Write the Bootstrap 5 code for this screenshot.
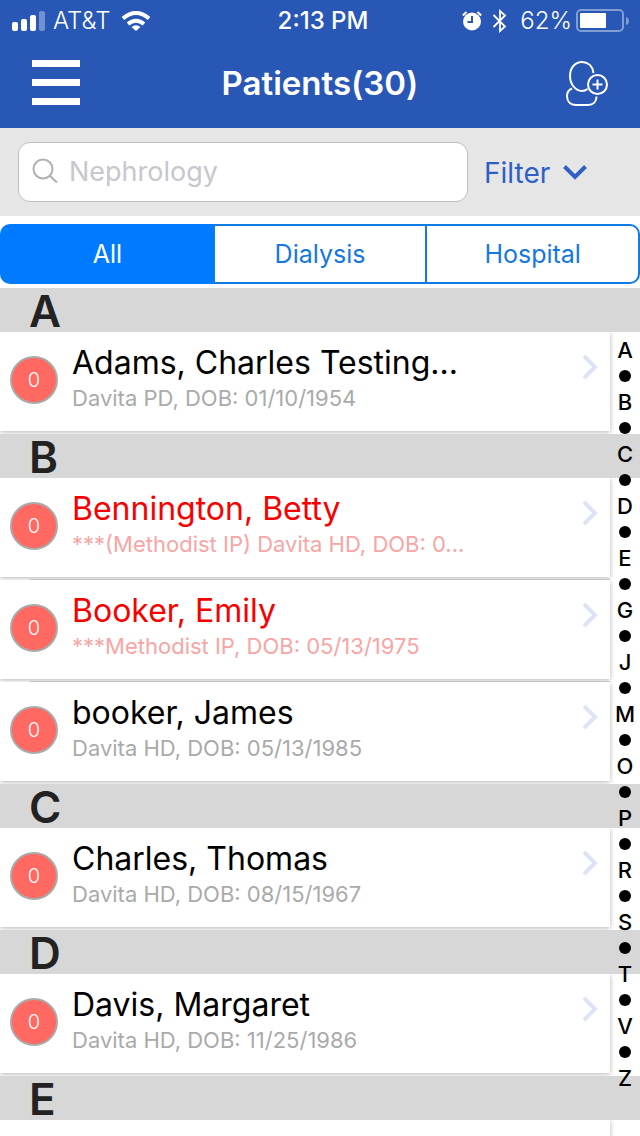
<!DOCTYPE html>
<html lang="en">
<head>
<meta charset="utf-8">
<meta name="viewport" content="width=device-width, initial-scale=1">
<title>Patients</title>
<link href="https://cdn.jsdelivr.net/npm/bootstrap@5.3.0/dist/css/bootstrap.min.css" rel="stylesheet">
<style>
  body { font-family: Inter, "Liberation Sans", sans-serif; color: #000; background: #fff; }
  svg { display: block; flex: none; }
  .app-top { background: #2957b5; color: #fff; }
  .app-top, .search-row, .segments { flex-shrink: 0; }
  .status-row { height: 40px; font-size: 24px; line-height: 32px; padding: 2px 10px 0 12px; }
  .side { flex: 1 1 0; }
  .clock { font-weight: 500; padding-left: 4px; }
  .thin { font-weight: 300; }
  .alarm { margin-right: 10px; }
  .bluetooth { margin-right: 12px; }
  .title-row { height: 88px; padding: 0 32px 2px; }
  .title-text { font-size: 33px; line-height: 40px; font-weight: 600; }
  .icon-btn { background: none; border: 0; padding: 0; color: inherit; }
  .search-row { height: 88px; background: #e6e6e6; padding: 0 18px; }
  .search-box { position: relative; width: 450px; max-width: 75%; }
  .search-box svg { position: absolute; left: 14px; top: 16px; }
  .search-box input { height: 60px; border: 1px solid #bcbec0; border-radius: 12px; font-size: 27px; padding: 0 16px 2px 50px; background: #fff; }
  .search-box input::placeholder { color: #c7c7cd; opacity: 1; }
  .filter-btn { color: #2e5fc4; font-size: 28px; line-height: 36px; gap: 13px; padding-top: 2px; }
  .segments { padding: 8px 0 4px; }
  .segments .btn { height: 60px; flex: 1 1 0; font-size: 25px; line-height: 32px; padding: 0; display: flex; align-items: center; justify-content: center;
    border: 2px solid #0f7be6; border-radius: 10px; --bs-btn-color: #1478e0; --bs-btn-hover-color: #1478e0; }
  .segments .btn-group > .btn:not(:first-of-type) { margin-left: -2px; }
  .segments .btn-check:checked + .btn { background: #007aff; border-color: #007aff; color: #fff; z-index: 0; }
  .list-area { min-height: 0; }
  .scroller { overflow-y: auto; scrollbar-width: none; }
  .scroller::-webkit-scrollbar { display: none; }
  .letter-head { height: 44px; background: #d7d7d7; color: #222; font-size: 44px; line-height: 44px; font-weight: 600; padding: 1px 0 0 29px; margin: 0; }
  .patients { padding-right: 30px; }
  .patients li { overflow: hidden; padding-right: 6px; margin-right: -6px; }
  .patients li:not(:last-child)::after { content: ""; display: block; height: 1px; margin: -1px 0 0 30px; background: #c3c3c3; position: relative; }
  .patient { background: #fff; height: 99px; margin-bottom: 3px; padding: 0 12px 3px 10px; color: #000; text-decoration: none; box-shadow: 0 1px 5px rgba(0,0,0,.3); position: relative; }
  .count { width: 48px; height: 48px; border: 2px solid #aaa; background: #ff6961; color: #fff; font-size: 20px; line-height: 24px; font-weight: 300; }
  .who { font-size: 32px; line-height: 38px; }
  .info { font-size: 22px; line-height: 28px; color: #aaa; margin-top: 2px; }
  .words { padding: 12px 0 0 14px; width: 412px; }
  .alerting .who { color: #f90000; }
  .alerting .info { color: #f8a5a5; }
  .chev { margin-top: 22px; }
  .jump { position: absolute; top: 49px; right: 0; width: 30px; }
  .jump a { color: #000; text-decoration: none; font-size: 22px; line-height: 26px; font-weight: 500; }
  .jump i { height: 26px; }
  .jump i::before { content: ""; width: 12px; height: 12px; border-radius: 50%; background: #000; }
</style>
</head>
<body>
<svg width="0" height="0" class="position-absolute" aria-hidden="true">
  <symbol id="next" viewBox="0 0 16 26"><path d="M2 2l11 11L2 24" fill="none" stroke="#dde4f6" stroke-width="4"/></symbol>
</svg>
<div class="d-flex flex-column vh-100 overflow-hidden">
  <header class="app-top">
    <div class="status-row d-flex align-items-center">
      <div class="side d-flex align-items-center">
        <svg width="33" height="20" viewBox="0 0 33 20" fill="#fff"><rect y="11" width="6" height="9" rx="2"/><rect x="9" y="8" width="6" height="12" rx="2"/><rect x="18" y="4" width="6" height="16" rx="2"/><rect x="27" width="6" height="20" rx="2" opacity=".35"/></svg>
        <span class="ms-2 thin">AT&amp;T</span>
        <svg class="ms-2" width="36" height="20" viewBox="-4 0 36 20"><g fill="none" stroke="#fff" stroke-width="4"><path d="M1 7.500Q14-3.500 27 7.500"/><path d="M6 13Q14 6.500 22 13"/></g><path d="M9.500 16Q14 12.500 18.500 16L14 20z" fill="#fff"/></svg>
      </div>
      <div class="clock">2:13 PM</div>
      <div class="side d-flex align-items-center justify-content-end">
        <svg class="alarm" width="20" height="20" viewBox="0 0 20 20"><circle cx="10" cy="10.500" r="9" fill="#fff"/><path d="M10 5v6H5.500" fill="none" stroke="#2957b5" stroke-width="2"/><path d="M.8 4.500L4.500 1M15.500 1l3.700 3.500" fill="none" stroke="#fff" stroke-width="2"/></svg>
        <svg class="bluetooth" width="16" height="24" viewBox="0 0 16 24"><path d="M1.500 6l11.500 11.500L8 22V2l5 4.500L1.500 18" fill="none" stroke="#fff" stroke-width="1.800"/></svg>
        <span class="thin">62%</span>
        <svg class="ms-1" width="54" height="24" viewBox="0 0 54 24"><rect x="1" y="1" width="46" height="21" rx="4" fill="none" stroke="#819dd4" stroke-width="2"/><rect x="4" y="4" width="26" height="15" rx="1" fill="#fff"/><path d="M50 8q3 1 3 4t-3 4z" fill="#819dd4"/></svg>
      </div>
    </div>
    <nav class="title-row d-flex align-items-center" aria-label="Main">
      <div class="side"><button class="icon-btn d-block" type="button" aria-label="Menu"><svg width="48" height="46" viewBox="0 0 48 46" fill="#fff"><path d="M0 0h48v7H0zM0 19h48v7H0zM0 38h48v7H0z"/></svg></button></div>
      <h1 class="title-text m-0">Patients(30)</h1>
      <div class="side d-flex justify-content-end"><button class="icon-btn d-block" type="button" aria-label="Add patient"><svg width="42" height="46" viewBox="0 0 42 46" fill="none" stroke="#fff" stroke-width="2"><path d="M27.500 13C26.500 5.500 21.500 2 16 2 8.500 2 4 8.500 4 16c0 8 5.500 15 12 15 2 0 4-.8 5.500-2"/><path d="M6 28.500C2.500 30 1 32.500 1 36c0 5 3 9 9 9h12c5 0 8.500-3 8.500-8.500"/><circle cx="31.500" cy="24.500" r="9.500"/><path d="M31.500 19.500v10M26.500 24.500h10"/></svg></button></div>
    </nav>
  </header>

  <form class="search-row d-flex align-items-center" role="search">
    <div class="search-box">
      <input class="form-control" type="text" placeholder="Nephrology" aria-label="Search by specialty">
      <svg width="26" height="26" viewBox="0 0 26 26" fill="none" stroke="#b0b0b0" stroke-width="2"><circle cx="11" cy="11" r="9.500"/><path d="M17.500 17.500l7.500 7"/></svg>
    </div>
    <button class="icon-btn filter-btn d-flex align-items-center ms-3" type="button">Filter
      <svg width="24" height="16" viewBox="0 0 24 16"><path d="M1.500 1.500L12 12 22.500 1.500" fill="none" stroke="#2e5fc4" stroke-width="4"/></svg>
    </button>
  </form>

  <div class="segments">
    <div class="btn-group d-flex" role="group" aria-label="Patient list">
      <input class="btn-check" type="radio" name="seg" id="all" checked><label class="btn" for="all">All</label>
      <input class="btn-check" type="radio" name="seg" id="dialysis"><label class="btn" for="dialysis">Dialysis</label>
      <input class="btn-check" type="radio" name="seg" id="hospital"><label class="btn" for="hospital">Hospital</label>
    </div>
  </div>

  <main class="list-area position-relative flex-fill">
    <div class="scroller h-100">
      <h2 class="letter-head" id="A">A</h2>
      <ul class="patients list-unstyled m-0">
        <li><a class="patient d-flex" href="#"><span class="count rounded-circle d-flex align-items-center justify-content-center flex-shrink-0 align-self-center">0</span><span class="words"><span class="who d-block text-truncate">Adams, Charles Testing...</span><span class="info d-block text-truncate">Davita PD, DOB: 01/10/1954</span></span><svg class="chev ms-auto" width="16" height="26"><use href="#next"/></svg></a></li>
      </ul>
      <h2 class="letter-head" id="B">B</h2>
      <ul class="patients list-unstyled m-0">
        <li><a class="patient alerting d-flex" href="#"><span class="count rounded-circle d-flex align-items-center justify-content-center flex-shrink-0 align-self-center">0</span><span class="words"><span class="who d-block text-truncate">Bennington, Betty</span><span class="info d-block text-truncate">***(Methodist IP) Davita HD, DOB: 0...</span></span><svg class="chev ms-auto" width="16" height="26"><use href="#next"/></svg></a></li>
        <li><a class="patient alerting d-flex" href="#"><span class="count rounded-circle d-flex align-items-center justify-content-center flex-shrink-0 align-self-center">0</span><span class="words"><span class="who d-block text-truncate">Booker, Emily</span><span class="info d-block text-truncate">***Methodist IP, DOB: 05/13/1975</span></span><svg class="chev ms-auto" width="16" height="26"><use href="#next"/></svg></a></li>
        <li><a class="patient d-flex" href="#"><span class="count rounded-circle d-flex align-items-center justify-content-center flex-shrink-0 align-self-center">0</span><span class="words"><span class="who d-block text-truncate">booker, James</span><span class="info d-block text-truncate">Davita HD, DOB: 05/13/1985</span></span><svg class="chev ms-auto" width="16" height="26"><use href="#next"/></svg></a></li>
      </ul>
      <h2 class="letter-head" id="C">C</h2>
      <ul class="patients list-unstyled m-0">
        <li><a class="patient d-flex" href="#"><span class="count rounded-circle d-flex align-items-center justify-content-center flex-shrink-0 align-self-center">0</span><span class="words"><span class="who d-block text-truncate">Charles, Thomas</span><span class="info d-block text-truncate">Davita HD, DOB: 08/15/1967</span></span><svg class="chev ms-auto" width="16" height="26"><use href="#next"/></svg></a></li>
      </ul>
      <h2 class="letter-head" id="D">D</h2>
      <ul class="patients list-unstyled m-0">
        <li><a class="patient d-flex" href="#"><span class="count rounded-circle d-flex align-items-center justify-content-center flex-shrink-0 align-self-center">0</span><span class="words"><span class="who d-block text-truncate">Davis, Margaret</span><span class="info d-block text-truncate">Davita HD, DOB: 11/25/1986</span></span><svg class="chev ms-auto" width="16" height="26"><use href="#next"/></svg></a></li>
      </ul>
      <h2 class="letter-head" id="E">E</h2>
      <ul class="patients list-unstyled m-0">
        <li><a class="patient d-flex" href="#" aria-label="Next patient"></a></li>
      </ul>
    </div>
    <nav class="jump d-flex flex-column text-center" aria-label="Jump to letter">
      <a href="#A">A</a><i class="d-flex align-items-center justify-content-center"></i>
      <a href="#B">B</a><i class="d-flex align-items-center justify-content-center"></i>
      <a href="#C">C</a><i class="d-flex align-items-center justify-content-center"></i>
      <a href="#D">D</a><i class="d-flex align-items-center justify-content-center"></i>
      <a href="#E">E</a><i class="d-flex align-items-center justify-content-center"></i>
      <a href="#G">G</a><i class="d-flex align-items-center justify-content-center"></i>
      <a href="#J">J</a><i class="d-flex align-items-center justify-content-center"></i>
      <a href="#M">M</a><i class="d-flex align-items-center justify-content-center"></i>
      <a href="#O">O</a><i class="d-flex align-items-center justify-content-center"></i>
      <a href="#P">P</a><i class="d-flex align-items-center justify-content-center"></i>
      <a href="#R">R</a><i class="d-flex align-items-center justify-content-center"></i>
      <a href="#S">S</a><i class="d-flex align-items-center justify-content-center"></i>
      <a href="#T">T</a><i class="d-flex align-items-center justify-content-center"></i>
      <a href="#V">V</a><i class="d-flex align-items-center justify-content-center"></i>
      <a href="#Z">Z</a>
    </nav>
  </main>
</div>
<script src="https://cdn.jsdelivr.net/npm/bootstrap@5.3.0/dist/js/bootstrap.bundle.min.js"></script>
</body>
</html>
